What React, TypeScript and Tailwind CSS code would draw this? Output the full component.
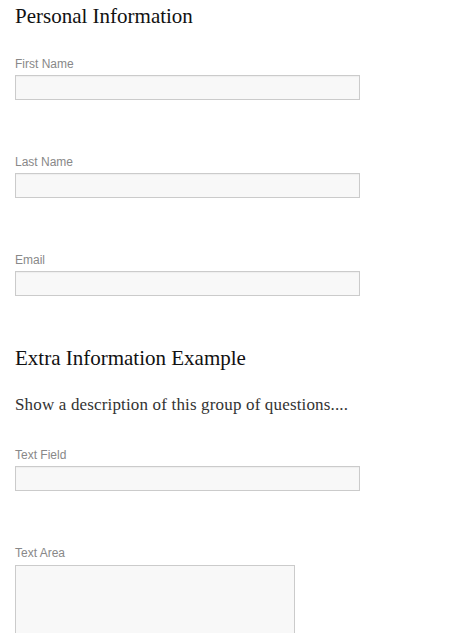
const serif = "font-['Georgia','Liberation_Serif',serif]";
const sans = "font-['Helvetica','Liberation_Sans',Arial,sans-serif]";

function Field({ label, first }: { label: string; first?: boolean }) {
  return (
    <div className={first ? "" : "mt-[54px]"}>
      <label className={`${sans} block text-[12px] leading-[16px] text-[#888]`}>{label}</label>
      <input
        type="text"
        className="mt-[3px] block h-[25px] w-[345px] border border-[#cbcbcb] bg-[#f8f8f8] shadow-[inset_0_1px_1px_rgba(0,0,0,0.04)] outline-none"
      />
    </div>
  );
}

export default function App() {
  return (
    <div className="min-h-screen bg-white pl-[15px] pt-[4px] overflow-hidden">
      <h2 className={`${serif} text-[21px] leading-[24px] text-[#111]`}>Personal Information</h2>
      <div className="mt-[28px]">
        <Field label="First Name" first />
        <Field label="Last Name" />
        <Field label="Email" />
      </div>

      <h2 className={`${serif} mt-[50px] text-[21px] leading-[24px] text-[#111]`}>
        Extra Information Example
      </h2>
      <p className={`${serif} mt-[25px] text-[17px] leading-[20px] tracking-[0.16px] text-[#333]`}>
        Show a description of this group of questions....
      </p>
      <div className="mt-[32px]">
        <Field label="Text Field" first />
        <div className="mt-[54px]">
          <label className={`${sans} block text-[12px] leading-[16px] text-[#888]`}>Text Area</label>
          <textarea className="mt-[4px] block h-[120px] w-[280px] resize-none border border-[#cbcbcb] bg-[#f8f8f8] outline-none" />
        </div>
      </div>
    </div>
  );
}
